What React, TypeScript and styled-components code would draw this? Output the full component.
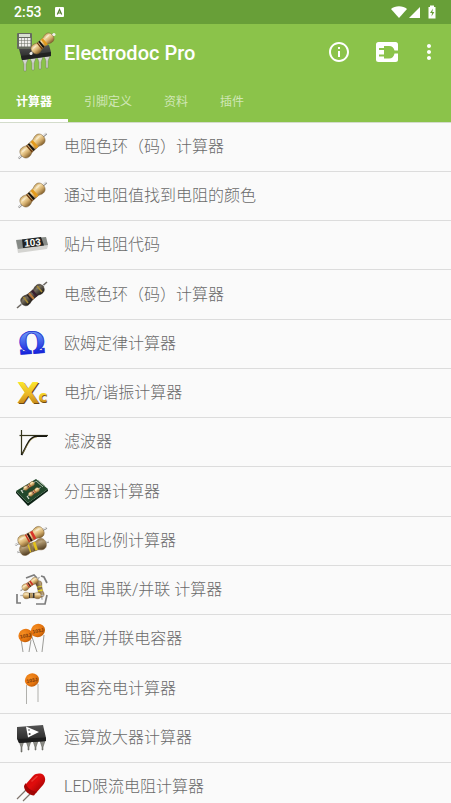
import React from "react";
import styled, { createGlobalStyle } from "styled-components";
import { MdOutlineInfo, MdMoreVert } from "react-icons/md";

const sans = `Roboto, "Noto Sans CJK SC", sans-serif`;

const GlobalStyle = createGlobalStyle`
  * { box-sizing: border-box; }
  html, body { height: 100%; overflow: hidden; }
  body { margin: 0; background: #fafafa; font-family: ${sans}; }
`;

const Screen = styled.div`
  height: 100vh;
  overflow: hidden;
  display: flex;
  flex-direction: column;
`;

const StatusBar = styled.div`
  flex: none;
  display: flex;
  align-items: center;
  height: 24px;
  padding: 0 14px;
  background: #689f38;
  color: #fff;
`;

const Clock = styled.time`
  margin-right: 13px;
  font-size: 14px;
  font-weight: 500;
  line-height: 24px;
`;

const StatusIcons = styled.div`
  display: flex;
  align-items: center;
  margin-left: auto;
`;

const Header = styled.header`
  flex: none;
  background: #8bc34a;
  border-bottom: 1px solid #d3dccb;
`;

const Toolbar = styled.div`
  display: flex;
  align-items: center;
  height: 56px;
  padding: 0 4px 0 16px;
  color: #fff;
`;

const Title = styled.h1`
  flex: 1;
  margin: 0 0 0 8px;
  padding-top: 2px;
  font-size: 20px;
  font-weight: 500;
  line-height: 28px;
`;

const ToolButton = styled.button<{ $width: number }>`
  display: flex;
  align-items: center;
  justify-content: center;
  width: ${(p) => p.$width}px;
  height: 48px;
  padding: 0;
  border: 0;
  background: none;
  color: inherit;
`;

const Tabs = styled.div`
  display: flex;
  height: 42px;
`;

const Tab = styled.button<{ $active: boolean }>`
  height: 42px;
  padding: 4px 16px 0;
  border: 0;
  border-bottom: 3px solid ${(p) => (p.$active ? "#fff" : "transparent")};
  background: none;
  color: ${(p) => (p.$active ? "#fff" : "#d1e7b7")};
  font: ${(p) => (p.$active ? 700 : 400)} 12px/16px ${sans};
`;

const List = styled.ul`
  margin: 0;
  padding: 0;
  list-style: none;
`;

const Row = styled.li`
  height: 49px;
  border-bottom: 1px solid #dcdcdc;
  &:nth-child(4n) { height: 50px; }
`;

const RowLink = styled.a`
  display: flex;
  align-items: center;
  gap: 16px;
  height: 100%;
  padding: 0 16px;
  color: #6a6a6a;
  font-size: 16px;
  font-weight: 300;
  line-height: 24px;
  text-decoration: none;
  white-space: pre;
`;

const Picture = styled.svg`
  flex: none;
  width: 32px;
  height: 32px;
  overflow: visible;
`;

type Palette = "tan" | "brown" | "dark";

const Gradients = () => (
  <svg width="0" height="0" display="block" aria-hidden="true">
    <defs>
      <linearGradient id="tan" x1="0" y1="0" x2="0" y2="1">
        <stop offset="0" stopColor="#c9a564" />
        <stop offset=".3" stopColor="#f6dda6" />
        <stop offset=".6" stopColor="#d5af6e" />
        <stop offset="1" stopColor="#805d2a" />
      </linearGradient>
      <linearGradient id="brown" x1="0" y1="0" x2="0" y2="1">
        <stop offset="0" stopColor="#9c8157" />
        <stop offset=".35" stopColor="#ad956c" />
        <stop offset="1" stopColor="#4f3b20" />
      </linearGradient>
      <linearGradient id="dark" x1="0" y1="0" x2="0" y2="1">
        <stop offset="0" stopColor="#4a4238" />
        <stop offset=".35" stopColor="#736b5c" />
        <stop offset="1" stopColor="#1c1814" />
      </linearGradient>
      <linearGradient id="blue" x1="0" y1="0" x2="0" y2="1">
        <stop offset="0" stopColor="#86acf0" />
        <stop offset=".3" stopColor="#5a83f2" />
        <stop offset=".8" stopColor="#1420e0" />
        <stop offset="1" stopColor="#0000a8" />
      </linearGradient>
      <linearGradient id="gold" x1="0" y1="0" x2="0" y2="1">
        <stop offset=".1" stopColor="#fff22e" />
        <stop offset=".55" stopColor="#e9b526" />
        <stop offset=".9" stopColor="#b87a18" />
      </linearGradient>
      <radialGradient id="orange" cx=".4" cy=".3" r=".8">
        <stop offset="0" stopColor="#f58e22" />
        <stop offset=".6" stopColor="#e5750f" />
        <stop offset="1" stopColor="#b35405" />
      </radialGradient>
      <linearGradient id="chip" x1="0" y1="0" x2="0" y2="1">
        <stop offset="0" stopColor="#555" />
        <stop offset=".5" stopColor="#3b3b3b" />
        <stop offset="1" stopColor="#222" />
      </linearGradient>
      <linearGradient id="red" x1="0" y1="0" x2="1" y2="1">
        <stop offset="0" stopColor="#c80c0c" />
        <stop offset=".45" stopColor="#e00c0c" />
        <stop offset="1" stopColor="#8a0000" />
      </linearGradient>
    </defs>
  </svg>
);

function Resistor({ place, palette = "tan", bands = ["#e39a1c", "#111", "#6b3a10"], lead = 20 }: {
  place: string; palette?: Palette; bands?: string[]; lead?: number;
}) {
  const shine = palette === "tan" ? 0.4 : 0.15;
  return (
    <g transform={place}>
      <path d={`M${-lead} 0H${lead}`} stroke="#858585" strokeWidth="2" />
      <path d={`M${-lead} -.3H${lead}`} stroke="#f2f2f2" strokeWidth="1" />
      <path
        d="M-15.5 0C-15.5-4-13-5.8-10-5.8C-7-5.8-6-4.4-4-4.4H4C6-4.4 7-5.8 10-5.8C13-5.8 15.5-4 15.5 0C15.5 4 13 5.8 10 5.8C7 5.8 6 4.4 4 4.4H-4C-6 4.4-7 5.8-10 5.8C-13 5.8-15.5 4-15.5 0Z"
        fill={`url(#${palette})`} stroke={palette === "dark" ? "#2a241d" : "#765b34"} strokeWidth=".5"
      />
      <path d="M-4.4-4.3V4.3" stroke={bands[2]} strokeWidth="1.6" />
      <path d="M-1.7-4.3V4.3" stroke={bands[1]} strokeWidth="2.2" />
      <path d="M2.8-4.3V4.3" stroke={bands[0]} strokeWidth="3" />
      <ellipse cx="-10" cy="-2.8" rx="2.8" ry="1.1" fill="#fff" opacity={shine} />
      <ellipse cx="10" cy="-2.8" rx="2.8" ry="1.1" fill="#fff" opacity={shine} />
    </g>
  );
}

const Axial = () => <Resistor place="translate(16.5 15) rotate(-42) scale(.94 1)" />;

const SmdResistor = () => (
  <>
    <path d="M0 12L2 24L31 20L32 17L30 8Z" fill="#d4d4d1" />
    <path d="M0 11L30 8L32 16L2 20Z" fill="#868a86" />
    <path d="M6 10.500L25 8L28 16.500L7 19Z" fill="#202222" />
    <text x="16.5" y="17" fill="#fff" fontFamily="Liberation Sans, sans-serif" fontSize="10" fontWeight="700" textAnchor="middle" transform="rotate(-5 16 14)">103</text>
  </>
);

const Inductor = () => (
  <>
    <path d="M1 29L31 3" stroke="#6c6862" strokeWidth="1.600" />
    <Resistor place="translate(16.5 16) rotate(-40) scale(.88 .86)" palette="dark" lead={17} bands={["#3a2030", "#c07c3c", "#2d1d19"]} />
    <path d="M21 7L26 13M7.500 18L12 24" stroke="#a98c35" strokeWidth="1.500" />
  </>
);

const Omega = () => (
  <text x="16" y="25.500" fill="url(#blue)" stroke="#1a2cd0" strokeWidth=".8" fontFamily="DejaVu Serif, serif" fontSize="30" fontWeight="700" textAnchor="middle" transform="rotate(-4 16 16)">Ω</text>
);

const Reactance = () => (
  <>
    <g fontFamily="DejaVu Sans, sans-serif" fontWeight="700" fill="#6d4a12">
      <text x="2" y="26.500" fontSize="29">X</text>
      <text x="23" y="26" fontSize="15">c</text>
    </g>
    <g fontFamily="DejaVu Sans, sans-serif" fontWeight="700" fill="url(#gold)">
      <text x="1" y="26" fontSize="29">X</text>
      <text x="22.500" y="25" fontSize="15">c</text>
    </g>
  </>
);

const Filter = () => (
  <g fill="none" strokeWidth="1.2">
    <path d="M5.500 4V29" stroke="#35351c" />
    <path d="M3.500 9.500H32" stroke="#35351c" />
    <path d="M5.500 29C11 20 13 10.500 21 10.200H31" stroke="#151510" strokeWidth="1.6" />
    <path d="M6.600 27.500C12 19 14 11.500 21 11.300" stroke="#c9b35a" strokeWidth=".5" />
  </g>
);

const Board = () => (
  <>
    <path d="M0 15L12 27L32 13V15L12 30L0 17Z" fill="#0d2315" />
    <path d="M0 15L20 3L32 13L12 27Z" fill="#22482b" />
    <path d="M20 5L27 11M22 4L29 10" stroke="#a9b8a5" strokeWidth="1" />
    <Resistor place="translate(13 10) rotate(-34) scale(.4)" bands={["#b66a37", "#633", "#843"]} />
    <Resistor place="translate(18 16) rotate(-34) scale(.4)" bands={["#b66a37", "#633", "#843"]} />
    <path d="M5 14L7 17M11 20L13 23" stroke="#d7ded2" strokeWidth="1.2" />
  </>
);

const RatioPair = () => (
  <>
    <Resistor place="translate(17 22) rotate(-19) scale(.88 .98)" palette="brown" lead={19} bands={["#e3c21b", "#8f7a4a", "#e0bf25"]} />
    <Resistor place="translate(15 11.500) rotate(-29) scale(.9 1)" bands={["#d8352a", "#2b0f0c", "#c92d21"]} />
  </>
);

const Network = () => (
  <>
    <g fill="none" stroke="#7d7d7d" strokeWidth="1.7">
      <path d="M10 4L18 1L21 4" />
      <path d="M25 2L28 3L31 9" />
      <path d="M1 20V29H5" />
      <path d="M20 30H29L31 21" />
    </g>
    <Resistor place="translate(24 15) rotate(78) scale(.54)" palette="brown" bands={["#e5d327", "#816a35", "#e5d327"]} />
    <Resistor place="translate(14 10) rotate(-35) scale(.58)" bands={["#ce2f24", "#571b15", "#ce2f24"]} />
    <Resistor place="translate(16 21.500) scale(.58)" bands={["#333", "#9a7d4a", "#222"]} />
  </>
);

function Disc({ x, y }: { x: number; y: number }) {
  return (
    <g transform={`translate(${x} ${y})`}>
      <ellipse rx="7.200" ry="6.500" fill="url(#orange)" transform="rotate(-25)" />
      <text y="2" fontSize="5" fontWeight="700" fontFamily="Liberation Sans, sans-serif" textAnchor="middle" fill="#783609" transform="rotate(-10)">103J</text>
    </g>
  );
}

const TwoDiscs = () => (
  <>
    <path d="M5 16L7 29M15 17L13 29M16 14L21 29M28 12L26 29" stroke="#9c9c98" fill="none" />
    <Disc x={22} y={7.5} />
    <Disc x={9.5} y={12.5} />
  </>
);

const OneDisc = () => (
  <>
    <path d="M10.500 12V31M22 11V29" stroke="#b0b0ac" fill="none" />
    <Disc x={16} y={7} />
  </>
);

const OpAmp = () => (
  <>
    {[5, 12, 19, 26].map((x) => (
      <path key={x} d={`M${x - 2} 19H${x + 3}L${x + 1} 25V${x < 10 ? 30 : 28}H${x}V25Z`} fill="#8c8c86" stroke="#55554f" strokeWidth=".5" />
    ))}
    <path d="M1 5L27 3L30 16V19L3 21L1 17Z" fill="url(#chip)" />
    <path d="M2 17L30 15.500V19L3 21Z" fill="#1c1c1c" />
    <path d="M10 4.500L23 10L12 15.500Z" fill="#fff" />
    <path d="M12 8H14M12.500 12H15M13.500 11V13" stroke="#333" strokeWidth=".8" />
  </>
);

const Led = () => (
  <>
    <path d="M10 19L1 28M15 22L7 30" stroke="#7f756d" strokeWidth="1.200" fill="none" />
    <path d="M10 13L17 5C20 2 25 2 27.500 4C30 7 29.500 11 27 14L20 22C16 24 9 19 10 13Z" fill="url(#red)" />
    <path d="M9.500 12C11 17 15 20 21 20.500L18 24.500C13 24 8 20 8 15Z" fill="#a20503" />
    <path d="M16 10L21 5.500" stroke="#f4564a" strokeWidth="1.600" strokeLinecap="round" opacity=".6" />
  </>
);

const rows: [string, React.FC][] = [
  ["电阻色环（码）计算器", Axial],
  ["通过电阻值找到电阻的颜色", Axial],
  ["贴片电阻代码", SmdResistor],
  ["电感色环（码）计算器", Inductor],
  ["欧姆定律计算器", Omega],
  ["电抗/谐振计算器", Reactance],
  ["滤波器", Filter],
  ["分压器计算器", Board],
  ["电阻比例计算器", RatioPair],
  ["电阻 串联/并联 计算器", Network],
  ["串联/并联电容器", TwoDiscs],
  ["电容充电计算器", OneDisc],
  ["运算放大器计算器", OpAmp],
  ["LED限流电阻计算器", Led],
];

const AppLogo = () => (
  <svg width="40" height="40" viewBox="0 0 40 40" aria-hidden="true">
    {[9, 17, 24, 31].map((x, i) => (
      <path key={x} d={`M${x - 3} ${27 - i}H${x + 3}L${x + 1} ${32 - i}V${39 - i}H${x - 1}V${32 - i}Z`} fill="#d4d6cf" stroke="#747b6b" strokeWidth=".5" />
    ))}
    <path d="M3 17L33 13L35 20V24L6 28Z" fill="url(#chip)" />
    <path d="M5 24L35 20V24L6 28Z" fill="#222" />
    <rect x="1" y="1" width="15" height="16" rx="1" fill="#666b60" />
    <rect x="3" y="2" width="11" height="3" fill="#d8dfd1" />
    {[6, 9, 12].map((y) => [3, 6, 9, 12].map((x) => (
      <rect key={`${x}-${y}`} x={x} y={y} width="2.500" height="2.500" fill="#eeeeea" />
    )))}
    <Resistor place="translate(26.500 11.500) rotate(-40) scale(.84 .9)" lead={18} />
    <circle cx="15" cy="21.500" r="1.500" fill="#f1f1ed" />
    <circle cx="38" cy="2.500" r="1.500" fill="#f1f1ed" />
  </svg>
);

const tabs = ["计算器", "引脚定义", "资料", "插件"];

export default function App() {
  return (
    <Screen>
      <GlobalStyle />
      <Gradients />
      <StatusBar>
        <Clock>2:53</Clock>
        <svg width="9" height="10" viewBox="0 0 9 10" aria-hidden="true">
          <rect width="9" height="10" rx="1" fill="#fff" />
          <path d="M2.300 7.500L4.500 2.500L6.700 7.500M3.200 6H5.800" fill="none" stroke="#567f31" strokeWidth="1.200" />
        </svg>
        <StatusIcons>
          <svg width="47" height="14" viewBox="0 0 47 14" aria-hidden="true" fill="#fff">
            <path d="M1 4C5 .3 13 .3 17 4L9 13Z" />
            <path d="M30 2V13H19Z" />
            <path d="M40 2V.500H44V2H45.500V13.500H38.500V2Z" />
            <path d="M43 3.500L40 8H42L41.500 11.500L44.300 7H42.300Z" fill="#689f38" />
          </svg>
        </StatusIcons>
      </StatusBar>
      <Header>
        <Toolbar>
          <AppLogo />
          <Title>Electrodoc Pro</Title>
          <ToolButton $width={48} aria-label="信息"><MdOutlineInfo size={24} /></ToolButton>
          <ToolButton $width={48} aria-label="插件">
            <svg width="22" height="20" viewBox="0 0 22 20" aria-hidden="true">
              <rect width="22" height="20" rx="2.500" fill="#fff" />
              <path d="M3 6H8V4H13C16 4 18 5.800 18.500 8.500H22V11.500H18.500C18 14.500 16 16.500 13 16.500H8V14.500H3V12.500H8V8H3Z" fill="#8bc34a" />
            </svg>
          </ToolButton>
          <ToolButton $width={36} aria-label="更多"><MdMoreVert size={24} /></ToolButton>
        </Toolbar>
        <Tabs role="tablist">
          {tabs.map((name, i) => (
            <Tab key={name} role="tab" aria-selected={i === 0} $active={i === 0}>{name}</Tab>
          ))}
        </Tabs>
      </Header>
      <List>
        {rows.map(([name, Drawing]) => (
          <Row key={name}>
            <RowLink href="#">
              <Picture viewBox="0 0 32 32" aria-hidden="true"><Drawing /></Picture>
              {name}
            </RowLink>
          </Row>
        ))}
      </List>
    </Screen>
  );
}
